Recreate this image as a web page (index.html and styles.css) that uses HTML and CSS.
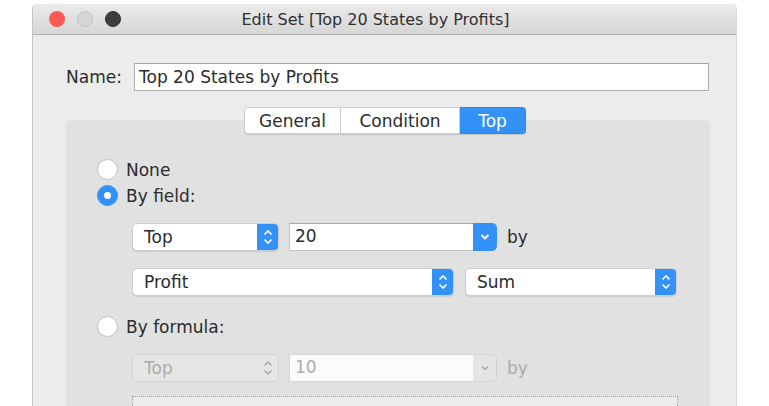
FILE: index.html
```html
<!DOCTYPE html>
<html>
<head>
<meta charset="utf-8">
<link rel="stylesheet" href="styles.css">
</head>
<body>
<div class="window">
  <div class="titlebar">
    <div class="lights">
      <span class="light red"></span>
      <span class="light grey"></span>
      <span class="light dark"></span>
    </div>
    <div class="title">Edit Set [Top 20 States by Profits]</div>
  </div>
  <div class="content">
    <div class="name-row">
      <label class="name-label">Name:</label>
      <div class="name-input">Top 20 States by Profits</div>
    </div>
    <div class="tabs">
      <div class="tab t-general">General</div>
      <div class="tab t-cond">Condition</div>
      <div class="tab t-top active">Top</div>
    </div>
    <div class="panel">
      <div class="radio-row"><span class="radio"></span><span>None</span></div>
      <div class="radio-row"><span class="radio checked"></span><span>By field:</span></div>
      <div class="ctrl-row row1">
        <div class="select w-top"><span class="sel-text">Top</span><span class="stepper"><svg width="12" height="20" viewBox="0 0 12 20"><path d="M2.5 7.5 L6 4 L9.5 7.5 M2.5 12.5 L6 16 L9.5 12.5" fill="none" stroke="#fff" stroke-width="1.6"/></svg></span></div>
        <div class="combo w-num"><span class="combo-text">20</span><span class="combo-btn"><svg width="12" height="10" viewBox="0 0 12 10"><path d="M2.5 3 L6 6.5 L9.5 3" fill="none" stroke="#fff" stroke-width="1.8"/></svg></span></div>
        <span class="by">by</span>
      </div>
      <div class="ctrl-row row2">
        <div class="select w-field"><span class="sel-text">Profit</span><span class="stepper"><svg width="12" height="20" viewBox="0 0 12 20"><path d="M2.5 7.5 L6 4 L9.5 7.5 M2.5 12.5 L6 16 L9.5 12.5" fill="none" stroke="#fff" stroke-width="1.6"/></svg></span></div>
        <div class="select w-agg"><span class="sel-text">Sum</span><span class="stepper"><svg width="12" height="20" viewBox="0 0 12 20"><path d="M2.5 7.5 L6 4 L9.5 7.5 M2.5 12.5 L6 16 L9.5 12.5" fill="none" stroke="#fff" stroke-width="1.6"/></svg></span></div>
      </div>
      <div class="radio-row formula"><span class="radio"></span><span>By formula:</span></div>
      <div class="ctrl-row row3 disabled">
        <div class="select w-top dis"><span class="sel-text">Top</span><span class="stepper"><svg width="12" height="20" viewBox="0 0 12 20"><path d="M2.5 7.5 L6 4 L9.5 7.5 M2.5 12.5 L6 16 L9.5 12.5" fill="none" stroke="#a8a8a8" stroke-width="1.4"/></svg></span></div>
        <div class="combo w-num dis"><span class="combo-text">10</span><span class="combo-btn"><svg width="12" height="10" viewBox="0 0 12 10"><path d="M3 3.5 L6 6.5 L9 3.5" fill="none" stroke="#a8a8a8" stroke-width="1.5"/></svg></span></div>
        <span class="by">by</span>
      </div>
      <div class="formula-box"></div>
    </div>
  </div>
</div>
</body>
</html>
```

FILE: styles.css
```css
* { box-sizing: border-box; }
html, body { margin: 0; padding: 0; background: #fff; }
body {
  font-family: "DejaVu Sans", "Liberation Sans", sans-serif;
  color: #2b2b2b;
  overflow: hidden;
  height: 406px;
}
.window {
  margin: 4px 0 0 32px;
  width: 705px;
  height: 410px;
  background: #ececec;
  border-left: 1px solid #c4c4c4;
  border-right: 1px solid #dcdcdc;
  border-top-left-radius: 5px;
  border-top-right-radius: 5px;
  overflow: hidden;
}
.titlebar {
  height: 31px;
  background: linear-gradient(#ebebeb, #d6d6d6);
  border-bottom: 1px solid #b4b4b4;
  display: flex;
  align-items: center;
  position: relative;
}
.lights {
  display: flex;
  gap: 12px;
  padding-left: 16px;
}
.light {
  width: 16px;
  height: 16px;
  border-radius: 50%;
  display: block;
}
.light.red { background: #fc5b57; }
.light.grey { background: #d6d6d6; border: 1px solid #c3c3c3; }
.light.dark { background: #3e3e3e; border: 1px solid #2c2c2c; }
.title {
  position: absolute;
  left: 0;
  right: 18px;
  top: 0;
  bottom: 0;
  display: flex;
  align-items: center;
  justify-content: center;
  font-size: 16px;
  color: #303030;
  pointer-events: none;
}
.content {
  padding: 28px 27px 0 33px;
}
.name-row {
  display: flex;
  align-items: center;
  gap: 12px;
}
.name-label {
  font-size: 17px;
  width: 56px;
}
.name-input {
  flex: 1;
  height: 28px;
  background: #fff;
  border: 1px solid #b0b0b0;
  border-top-color: #a4a4a4;
  font-size: 17px;
  padding: 0 4px;
  line-height: 26px;
}
.tabs {
  display: flex;
  justify-content: center;
  margin: 16px 0 -14px 0;
  padding-right: 5px;
  position: relative;
  z-index: 1;
}
.tab {
  height: 27px;
  line-height: 26px;
  font-size: 17px;
  background: #fff;
  border: 1px solid #cfcfcf;
  border-left: none;
  text-align: center;
  box-shadow: 0 1px 1px rgba(0,0,0,0.12);
}
.t-general {
  width: 97px;
  border-left: 1px solid #cfcfcf;
  border-radius: 4px 0 0 4px;
}
.t-cond { width: 119px; }
.t-top { width: 66px; }
.tab.active {
  background: #3391f7;
  color: #fff;
  border-color: #2d86ec;
  border-radius: 0 4px 4px 0;
}
.panel {
  width: 644px;
  height: 300px;
  background: #e1e1e1;
  border-radius: 5px 5px 0 0;
  padding: 37px 0 0 31px;
  font-size: 17px;
}
.radio-row {
  display: flex;
  align-items: center;
  gap: 8px;
  height: 27px;
  margin-top: -1px;
}
.radio {
  width: 21px;
  height: 21px;
  border-radius: 50%;
  background: #fff;
  border: 1px solid #c0c0c0;
  display: block;
  position: relative;
}
.radio.checked {
  background: #3391f7;
  border-color: #3391f7;
}
.radio.checked::after {
  content: "";
  position: absolute;
  left: 6px;
  top: 6px;
  width: 7px;
  height: 7px;
  border-radius: 50%;
  background: #fff;
}
.ctrl-row {
  display: flex;
  align-items: center;
  padding-left: 35px;
}
.row1 { margin-top: 14px; }
.row2 { margin-top: 17px; }
.row3 { margin-top: 14px; }
.formula { margin-top: 17px; }
.select {
  height: 28px;
  background: #fff;
  border: 1px solid #cdcdcd;
  border-radius: 5px;
  display: flex;
  align-items: stretch;
  box-shadow: 0 1px 1px rgba(0,0,0,0.1);
  overflow: hidden;
}
.sel-text {
  flex: 1;
  padding-left: 11px;
  line-height: 26px;
}
.stepper {
  width: 21px;
  background: #3391f7;
  display: flex;
  align-items: center;
  justify-content: center;
}
.w-top { width: 147px; }
.w-num { width: 208px; margin-left: 10px; }
.w-field { width: 322px; }
.w-agg { width: 212px; margin-left: 11px; }
.combo {
  height: 28px;
  display: flex;
  align-items: stretch;
}
.combo-text {
  flex: 1;
  background: #fff;
  border: 1px solid #c4c4c4;
  border-top-color: #a8a8a8;
  border-right: none;
  padding-left: 5px;
  line-height: 25px;
}
.combo-btn {
  width: 24px;
  background: #3391f7;
  border-radius: 0 5px 5px 0;
  display: flex;
  align-items: center;
  justify-content: center;
}
.by {
  margin-left: 10px;
  line-height: 28px;
}
.disabled { color: #acacac; }
.select.dis {
  background: #e6e6e6;
  border-color: #d2d2d2;
  box-shadow: none;
}
.select.dis .stepper { background: transparent; }
.combo.dis .combo-text {
  background: #fbfbfb;
  border-color: #d6d6d6;
}
.combo.dis .combo-btn {
  background: #e4e4e4;
  border: 1px solid #d2d2d2;
  border-left: none;
}
.formula-box {
  margin: 14px 0 0 35px;
  width: 546px;
  height: 40px;
  background: #ececec;
  border-top: 1px dotted #999;
  border-left: 1px dotted #999;
  border-right: 1px dotted #999;
}
```
